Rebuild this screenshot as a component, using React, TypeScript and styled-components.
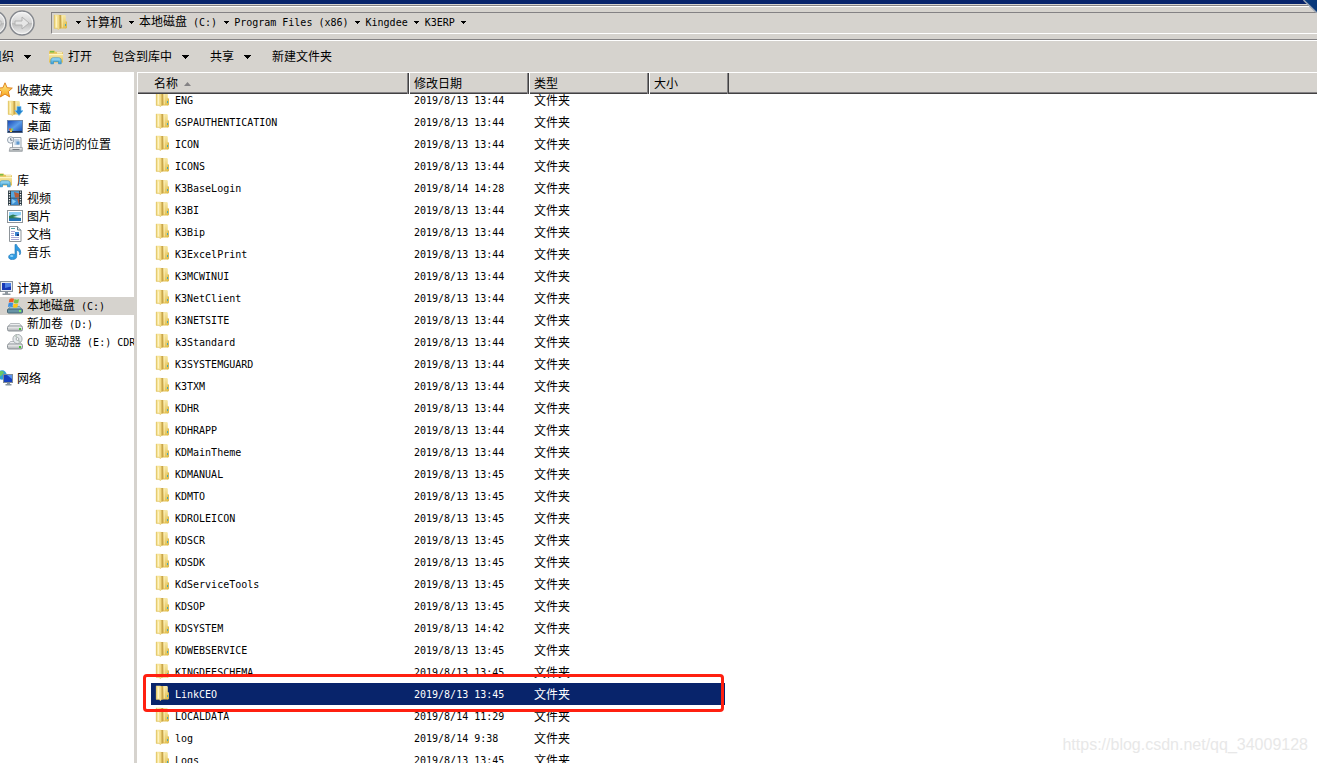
import React from "react";
import styled, { createGlobalStyle, css } from "styled-components";

const face = "#d6d3ce";
const navy = "#08246b";
const shade = "#848284";

const GlobalStyle = createGlobalStyle`
  *, *::before, *::after { box-sizing: border-box; }
  body {
    margin: 0;
    overflow: hidden;
    background: #fff;
    color: #000;
    font: 12px/18px "Liberation Sans", "Noto Sans CJK SC", sans-serif;
  }
  button { font: inherit; color: inherit; background: none; border: 0; padding: 0; }
  a { color: inherit; text-decoration: none; }
  ul, ol { list-style: none; margin: 0; padding: 0; }
  svg { display: block; flex: none; }
`;

/* ---------- text ---------- */

const Han = styled.span`
  font-family: "Noto Sans CJK SC", sans-serif;
  font-size: 12px;
`;
const Latin = styled.span`
  font-family: "DejaVu Sans Mono", "Liberation Mono", monospace;
  font-size: 10px;
`;
const Line = styled.span`
  display: block;
  white-space: pre;
  line-height: 18px;
`;

function Text({ children }: { children: string }) {
  const parts = children.match(/[\u4e00-\u9fff]+|[^\u4e00-\u9fff]+/g) || [];
  return (
    <Line>
      {parts.map((p, i) =>
        /[\u4e00-\u9fff]/.test(p) ? <Han key={i}>{p}</Han> : <Latin key={i}>{p}</Latin>
      )}
    </Line>
  );
}

/* ---------- icons ---------- */

const Icon = ({ children, size = 16 }: { children: React.ReactNode; size?: number }) => (
  <svg width={size} height={size} viewBox="0 0 16 16" aria-hidden="true">
    {children}
  </svg>
);

const HiddenSvg = styled.svg`
  position: absolute;
`;

const Defs = () => (
  <HiddenSvg width="0" height="0" aria-hidden="true">
    <defs>
      <linearGradient id="flap" x1="0" x2="1">
        <stop offset="0" stopColor="#e9cf72" />
        <stop offset="0.35" stopColor="#fbeba6" />
        <stop offset="1" stopColor="#f0d67c" />
      </linearGradient>
      <linearGradient id="back" x1="0" y1="0" x2="0" y2="1">
        <stop offset="0" stopColor="#f7e9a8" />
        <stop offset="1" stopColor="#e3bf4e" />
      </linearGradient>
      <linearGradient id="spine" x1="0" x2="1">
        <stop offset="0" stopColor="#e3c468" />
        <stop offset="1" stopColor="#c19c42" />
      </linearGradient>
      <linearGradient id="blue" x1="0" y1="0" x2="1" y2="1">
        <stop offset="0" stopColor="#1443b4" />
        <stop offset="0.5" stopColor="#5c9de8" />
        <stop offset="1" stopColor="#0b45ae" />
      </linearGradient>
      <linearGradient id="stand" x1="0" y1="0" x2="0" y2="1">
        <stop offset="0" stopColor="#a9e1f7" />
        <stop offset="1" stopColor="#2e9bd6" />
      </linearGradient>
      <linearGradient id="metal" x1="0" y1="0" x2="0" y2="1">
        <stop offset="0" stopColor="#fafafa" />
        <stop offset="1" stopColor="#a9adb0" />
      </linearGradient>
      <linearGradient id="star" x1="0" y1="0" x2="0" y2="1">
        <stop offset="0" stopColor="#fff08a" />
        <stop offset="1" stopColor="#f8a21c" />
      </linearGradient>
      <linearGradient id="orb" x1="0" y1="0" x2="0" y2="1">
        <stop offset="0" stopColor="#f4f4f4" />
        <stop offset="0.5" stopColor="#d2d2d2" />
        <stop offset="0.52" stopColor="#bcbcbc" />
        <stop offset="1" stopColor="#efefef" />
      </linearGradient>
    </defs>
  </HiddenSvg>
);

const folderShape = (
  <>
    <path d="M7 1h5l.8.8V7l1.200 1v5.500l-1 1H7z" fill="url(#back)" />
    <path d="M12.800 7l1.200 1v5.500l-1 1h-.5z" fill="#dcb94e" />
    <path d="M5 1h3.200v13L5 15.500z" fill="url(#spine)" />
    <path d="M1 .8h4.500l.8 1V15l-.8.800L4 14.500H1z" fill="url(#flap)" />
    <path d="M1.300 1v13.300H4l1.500 1.300" fill="none" stroke="#dfc366" strokeWidth="0.7" />
    <path d="M3.500 2.500v11" stroke="#fff6cc" strokeWidth="0.8" />
    <path d="M9.300 2v11.500" stroke="#fbeeb4" strokeWidth="0.8" />
    <rect x="12" y="10" width="1" height="2" fill="#46a8b8" />
  </>
);
const FolderIcon = () => <Icon>{folderShape}</Icon>;
const DownloadIcon = () => (
  <Icon>
    {folderShape}
    <path d="M10 6.5h4v4h2.2l-4.2 5-4.2-5H10z" fill="#2583cf" stroke="#7cc3f0" strokeWidth="0.7" />
  </Icon>
);
const LibraryIcon = () => (
  <Icon>
    <path d="M1 2.5l1-1h4.5l1 1.3H14l1 1V13H1z" fill="#e6c65c" />
    <path d="M2 2.2h4.2v1.2H2z" fill="#5eb842" />
    <path d="M9 3.2h5v1.2H9z" fill="#f7f2d4" />
    <path d="M1 5h14v8.5H1z" fill="url(#back)" />
    <path d="M1 5.4h14" stroke="#fff6c8" />
    <path
      d="M2.8 14.8V11.5c0-1.7 1.2-2.7 2.6-2.7h5.2c1.4 0 2.6 1 2.6 2.7v3.3h-2.7v-2.4h-5v2.4z"
      fill="url(#stand)"
      stroke="#338fc4"
      strokeWidth="0.7"
    />
  </Icon>
);
const StarIcon = () => (
  <Icon>
    <path
      d="M8 .8l2.1 4.9 5.2.4-4 3.5 1.3 5.3L8 12.1l-4.6 2.8 1.3-5.3-4-3.5 5.2-.4z"
      fill="url(#star)"
      stroke="#dd7a12"
      strokeWidth="0.9"
    />
  </Icon>
);
const DesktopIcon = () => (
  <Icon>
    <rect x="0.5" y="2.5" width="15" height="12" fill="url(#blue)" stroke="#6e86a8" />
    <path d="M1 13h14v1.5H1z" fill="#1a2f55" />
    <path d="M2 10.5h2v2H2z" fill="#f15a29" />
    <path d="M4 10.5h2v2H4z" fill="#8cd04c" />
    <path d="M3 12.5h2v1.5H3z" fill="#ffd23e" />
  </Icon>
);
const RecentIcon = () => (
  <Icon>
    <path d="M5.5 1.5h8.5v11H5.5z" fill="#f5f7f9" stroke="#98a2ac" />
    <path d="M7.5 4h5M7.5 6h5M7.5 8h5" stroke="#86abcf" />
    <rect x="9.5" y="5.5" width="3" height="3" fill="#5e98ce" />
    <path d="M3 11.5h12.3v3.8H2.2z" fill="url(#metal)" stroke="#8b9298" strokeWidth="0.7" />
    <path d="M5.5 13.5h7" stroke="#747b82" />
    <circle cx="3.7" cy="4" r="3.2" fill="#eef3f8" stroke="#8b98a6" strokeWidth="0.9" />
    <path d="M3.7 2v2.2h1.8" fill="none" stroke="#44576d" strokeWidth="0.8" />
  </Icon>
);
const VideoIcon = () => (
  <Icon>
    <rect x="1" y="0.5" width="14" height="15" fill="#2c3a42" />
    <rect x="4" y="1.2" width="8" height="6.5" fill="#56a7e0" />
    <rect x="4" y="8.4" width="8" height="6.5" fill="#3f8fd2" />
    <path d="M7 2l5 1.5v4H8z" fill="#b65e3b" />
    <path d="M5 9l4 2.2-3.5 3z" fill="#8fd0f4" />
    <path d="M10 8.4h2v6.5z" fill="#b65e3b" />
    <path d="M2.5 1.5v14M13.5 1.5v14" stroke="#f1f5f6" strokeWidth="1.3" strokeDasharray="1.2 1.3" />
  </Icon>
);
const PictureIcon = () => (
  <Icon>
    <rect x="0.5" y="2.5" width="15" height="12" fill="#fff" stroke="#8f9599" />
    <rect x="2" y="4" width="12" height="9" fill="#8ed0f5" />
    <path d="M2 8l4-1.5L14 9v2H2z" fill="#2d7e55" />
    <path d="M6 9l8-2v3z" fill="#e7f6fb" />
    <path d="M2 10.3h12V13H2z" fill="#2374b8" />
  </Icon>
);
const DocumentIcon = () => (
  <Icon>
    <path d="M2.5.5h8l3.500 3.500v11.500h-11.500z" fill="#fff" stroke="#8d9499" />
    <path d="M10.500.5V4H14" fill="#dfe6ea" stroke="#667f88" />
    <path d="M4 2.500h4" stroke="#4f9fa5" />
    <path d="M4 5.500h4M4 7.500h3M4 9.500h3M4 11.500h8M4 13.500h8" stroke="#aaa6d4" />
    <rect x="8" y="6" width="4" height="4" fill="#3c84d0" />
    <rect x="10" y="8" width="2" height="2" fill="#173d80" />
  </Icon>
);
const MusicIcon = () => (
  <Icon>
    <path
      d="M8 .5h1.500c.4 3 4.700 3.800 4.200 8.300-.1.900-.6 1.700-1.100 2.200.4-2.700-.9-4.300-2.900-5v6.600c0 1.900-1.900 3-4.200 3-2.200 0-3.900-.9-3.900-2.700 0-1.700 1.900-2.900 3.900-2.900 1 0 1.800.2 2.500.5z"
      fill="#2f9be2"
      stroke="#1c74b4"
      strokeWidth="0.6"
    />
    <ellipse cx="4.700" cy="12" rx="1.700" ry="1" fill="#8fd3f8" />
  </Icon>
);
const ComputerIcon = () => (
  <Icon>
    <rect x="3.500" y="1.500" width="12" height="10" fill="#e9edf0" stroke="#8b949b" />
    <rect x="5" y="3" width="9" height="7" fill="#1739b6" />
    <path d="M8 3h6v3.500L8 8z" fill="#4c7fe4" />
    <path d="M8 12h3v1.500h2.500v1.500h-8v-1.500H8z" fill="#8f989f" />
  </Icon>
);
const drive = (
  <>
    <path d="M3.500 7.500h9l2.500 3H1z" fill="#eceeef" stroke="#9ca2a6" strokeWidth="0.7" />
    <rect x="0.500" y="10" width="15" height="5" rx="1.500" fill="url(#metal)" stroke="#8a9196" />
    <rect x="12" y="12" width="2" height="2" fill="#46c83c" />
  </>
);
const SystemDriveIcon = () => (
  <Icon>
    <path d="M3.500 8.500h9l2.500 3H1z" fill="#9cc4d6" stroke="#628a9a" strokeWidth="0.7" />
    <rect x="0.500" y="11" width="15" height="4" rx="1" fill="#6793a6" stroke="#456674" />
    <rect x="12" y="12" width="2" height="2" fill="#7df45c" />
    <path d="M2.500 1c1.500-1 3-1 4.500-.2L6.300 4.500c-1.500-.8-3-.8-4.500 0z" fill="#ee5a24" />
    <path d="M7.500 1.100c1.500.8 3 .8 4.500 0L11.300 4.800c-1.500.8-3 .8-4.500 0z" fill="#79c143" />
    <path d="M1.600 5.200c1.500-.8 3-.8 4.500 0L5.400 9c-1.500-.8-3-.8-4.500 0z" fill="#3b8fe0" />
    <path d="M6.600 5.500c1.500.8 3 .8 4.500 0l-.7 3.700c-1.500.8-3 .8-4.500 0z" fill="#fcc419" />
  </Icon>
);
const DriveIcon = () => <Icon>{drive}</Icon>;
const DiscDriveIcon = () => (
  <Icon>
    {drive}
    <circle cx="10.500" cy="5" r="4.600" fill="#e4e8ea" stroke="#979da1" strokeWidth="0.8" />
    <path d="M10.500 5L7.500 1.800 10 .8zM10.500 5l3.600 2.500-2 1.800z" fill="#b9c7bd" />
    <circle cx="10.500" cy="5" r="1.400" fill="#fff" stroke="#888f94" strokeWidth="0.700" />
  </Icon>
);
const NetworkIcon = () => (
  <Icon>
    <circle cx="5" cy="5" r="4.700" fill="#2f9fd8" />
    <path d="M2 2c2-1.500 4-1 5 .5L5 5 2.500 7zM6 5l3-1v4H6z" fill="#6cc763" />
    <rect x="6.500" y="4.500" width="9" height="8" fill="#e6eaee" stroke="#7f8b95" />
    <rect x="7" y="5" width="8" height="7" fill="#1641c0" />
    <path d="M10 5h5v4z" fill="#5b94f0" />
    <path d="M10 13h3v1h1.500v1.500h-6V14H10z" fill="#8796a0" />
  </Icon>
);

const Caret = ({ wide }: { wide?: boolean }) =>
  wide ? (
    <svg width="8" height="4" viewBox="0 0 8 4" shapeRendering="crispEdges" aria-hidden="true">
      <path d="M0 0h8L4 4z" />
    </svg>
  ) : (
    <svg width="6" height="3" viewBox="0 0 6 3" shapeRendering="crispEdges" aria-hidden="true">
      <path d="M0 0h6L3 3z" />
    </svg>
  );

/* ---------- window frame ---------- */

const Window = styled.div`
  position: relative;
  display: flex;
  flex-direction: column;
  height: 100vh;
  overflow: hidden;
  background: ${face};
`;
const TitleEdge = styled.div`
  flex: none;
  height: 7px;
  background: ${face};
  border-top: 4px solid ${navy};
  border-bottom: 1px solid #fff;
  box-shadow: inset 0 -1px ${shade};
`;
const Corner = styled.svg`
  position: absolute;
  top: 0;
  right: 0;
`;

const AddressRow = styled.nav`
  flex: none;
  display: flex;
  height: 33px;
  padding-top: 5px;
  border-bottom: 1px solid ${shade};
`;
const HistoryButtons = styled.div`
  flex: none;
  width: 51px;
  height: 24px;
  display: flex;
  margin-top: -2px;
`;
const OrbButton = styled.button`
  flex: none;
  width: 26px;
  height: 26px;
  & + & { margin-left: 2px; }
  &:first-child { margin-left: -19px; }
`;
const AddressBox = styled.ol`
  flex: 1;
  display: flex;
  align-items: center;
  height: 22px;
  padding: 0 0 2px 1px;
  border: solid ${shade};
  border-width: 1px 0 0 1px;
  border-bottom: 1px solid #fff;
`;
const Crumb = styled.li`
  display: flex;
  align-items: center;
`;
const CrumbArrow = styled.button`
  width: 17px;
  height: 18px;
  display: flex;
  align-items: center;
  justify-content: center;
`;

const Toolbar = styled.div`
  flex: none;
  display: flex;
  align-items: center;
  height: 32px;
  border-top: 1px solid #fff;
`;
const ToolButton = styled.button`
  display: flex;
  align-items: center;
  gap: 9px;
  margin-right: 21px;
  &:first-child { margin-left: -10px; margin-right: 17px; }
`;
const OpenButton = styled(ToolButton)`
  gap: 4px;
  margin-right: 20px;
`;

const Body = styled.div`
  flex: 1;
  min-height: 0;
  display: flex;
`;

/* ---------- navigation pane ---------- */

const Sidebar = styled.aside`
  flex: none;
  width: 137px;
  overflow: hidden;
  padding-top: 9px;
  background: #fff;
  border-right: 3px solid ${face};
`;
const Group = styled.ul`
  margin-bottom: 18px;
`;
const Place = styled.a<{ $root?: boolean; $active?: boolean }>`
  display: flex;
  align-items: center;
  gap: 4px;
  height: 18px;
  padding-left: 7px;
  ${(p) => p.$root && css`padding-left: 0; margin-left: -3px;`}
  ${(p) => p.$active && css`background: ${face};`}
`;

type Entry = { label: string; icon: () => React.ReactElement; active?: boolean };
const groups: Entry[][] = [
  [
    { label: "收藏夹", icon: StarIcon },
    { label: "下载", icon: DownloadIcon },
    { label: "桌面", icon: DesktopIcon },
    { label: "最近访问的位置", icon: RecentIcon },
  ],
  [
    { label: "库", icon: LibraryIcon },
    { label: "视频", icon: VideoIcon },
    { label: "图片", icon: PictureIcon },
    { label: "文档", icon: DocumentIcon },
    { label: "音乐", icon: MusicIcon },
  ],
  [
    { label: "计算机", icon: ComputerIcon },
    { label: "本地磁盘 (C:)", icon: SystemDriveIcon, active: true },
    { label: "新加卷 (D:)", icon: DriveIcon },
    { label: "CD 驱动器 (E:) CDROM", icon: DiscDriveIcon },
  ],
  [{ label: "网络", icon: NetworkIcon }],
];

/* ---------- file list ---------- */

const ListPane = styled.main`
  flex: 1;
  min-width: 0;
  overflow: hidden;
  background: #fff;
`;
const Table = styled.table`
  display: block;
  width: 100%;
`;
const Head = styled.thead`
  display: block;
  position: relative;
  z-index: 1;
  background: ${face};
  border-top: 1px solid #fff;
  border-bottom: 1px solid #424142;
  box-shadow: inset 0 -1px ${shade};
`;
const HeadRow = styled.tr`
  display: grid;
  grid-template-columns: 272px 120px 120px 80px;
  height: 20px;
`;
const HeadCell = styled.th`
  display: flex;
  align-items: center;
  gap: 6px;
  padding-left: 5px;
  font-weight: normal;
  border-right: 1px solid #424142;
  box-shadow: inset 1px 0 #fff, inset -1px 0 ${shade};
  &:first-child { padding-left: 17px; }
`;
const Rows = styled.tbody`
  display: block;
  margin-top: -5px;
`;
const Row = styled.tr<{ $selected?: boolean }>`
  display: grid;
  position: relative;
  grid-template-columns: 258px 120px 196px;
  width: 574px;
  height: 22px;
  margin-left: 14px;
  ${(p) => p.$selected && css`
    z-index: 1;
    color: #fff;
    background: ${navy};
    &::after {
      content: "";
      position: absolute;
      inset: -9px 1px -7px -8px;
      border: 3px solid #ff2010;
      border-radius: 4px;
    }
  `}
`;
const Cell = styled.td`
  display: flex;
  align-items: center;
  gap: 4px;
  padding: 0 0 0 5px;
  &:first-child { padding-left: 4px; }
  svg { margin-bottom: 2px; }
`;

const Watermark = styled.div`
  position: absolute;
  right: 9px;
  bottom: 8px;
  font: 16px/20px "Liberation Sans", sans-serif;
  color: #e8e8e8;
`;

const day13 = "2019/8/13 ";
const files: [string, string][] = [
  ["ENG", day13 + "13:44"],
  ["GSPAUTHENTICATION", day13 + "13:44"],
  ["ICON", day13 + "13:44"],
  ["ICONS", day13 + "13:44"],
  ["K3BaseLogin", "2019/8/14 14:28"],
  ["K3BI", day13 + "13:44"],
  ["K3Bip", day13 + "13:44"],
  ["K3ExcelPrint", day13 + "13:44"],
  ["K3MCWINUI", day13 + "13:44"],
  ["K3NetClient", day13 + "13:44"],
  ["K3NETSITE", day13 + "13:44"],
  ["k3Standard", day13 + "13:44"],
  ["K3SYSTEMGUARD", day13 + "13:44"],
  ["K3TXM", day13 + "13:44"],
  ["KDHR", day13 + "13:44"],
  ["KDHRAPP", day13 + "13:44"],
  ["KDMainTheme", day13 + "13:44"],
  ["KDMANUAL", day13 + "13:45"],
  ["KDMTO", day13 + "13:45"],
  ["KDROLEICON", day13 + "13:45"],
  ["KDSCR", day13 + "13:45"],
  ["KDSDK", day13 + "13:45"],
  ["KdServiceTools", day13 + "13:45"],
  ["KDSOP", day13 + "13:45"],
  ["KDSYSTEM", day13 + "14:42"],
  ["KDWEBSERVICE", day13 + "13:45"],
  ["KINGDEESCHEMA", day13 + "13:45"],
  ["LinkCEO", day13 + "13:45"],
  ["LOCALDATA", "2019/8/14 11:29"],
  ["log", "2019/8/14 9:38"],
  ["Logs", day13 + "13:45"],
];
const crumbs = ["计算机", "本地磁盘 (C:)", "Program Files (x86)", "Kingdee", "K3ERP"];

const Orb = ({ back }: { back?: boolean }) => (
  <svg width="26" height="26" viewBox="0 0 26 26" aria-hidden="true">
    <circle cx="13" cy="13" r="12" fill="url(#orb)" stroke="#85888e" strokeWidth="1.500" />
    <circle cx="13" cy="13" r="10.700" fill="none" stroke="#f6f6f6" />
    <path
      d="M6 11h7V7l7 6-7 6v-4H6z"
      fill="#e6e6e6"
      stroke="#b2b2b2"
      transform={back ? "rotate(180 13 13)" : undefined}
    />
  </svg>
);

export default function App() {
  return (
    <Window>
      <GlobalStyle />
      <Defs />
      <TitleEdge />
      <Corner width="15" height="13" viewBox="0 0 15 13" aria-hidden="true">
        <path d="M2 0h13v13z" fill="#08397b" />
        <path d="M1.500 0L15 13" stroke="#9ba6b5" strokeWidth="1.500" />
      </Corner>

      <AddressRow aria-label="地址">
        <HistoryButtons>
          <OrbButton aria-label="后退"><Orb back /></OrbButton>
          <OrbButton aria-label="前进"><Orb /></OrbButton>
        </HistoryButtons>
        <AddressBox>
          <Crumb>
            <FolderIcon />
            <CrumbArrow aria-label="展开"><Caret /></CrumbArrow>
          </Crumb>
          {crumbs.map((c) => (
            <Crumb key={c}>
              <a href="#"><Text>{c}</Text></a>
              <CrumbArrow aria-label={c}><Caret /></CrumbArrow>
            </Crumb>
          ))}
        </AddressBox>
      </AddressRow>

      <Toolbar>
        <ToolButton><Text>组织</Text><Caret wide /></ToolButton>
        <OpenButton><LibraryIcon /><Text>打开</Text></OpenButton>
        <ToolButton><Text>包含到库中</Text><Caret wide /></ToolButton>
        <ToolButton><Text>共享</Text><Caret wide /></ToolButton>
        <ToolButton><Text>新建文件夹</Text></ToolButton>
      </Toolbar>

      <Body>
        <Sidebar>
          {groups.map((g) => (
            <Group key={g[0].label}>
              {g.map((e, i) => (
                <li key={e.label}>
                  <Place href="#" $root={i === 0} $active={e.active}>
                    <e.icon />
                    <Text>{e.label}</Text>
                  </Place>
                </li>
              ))}
            </Group>
          ))}
        </Sidebar>
        <ListPane>
          <Table>
            <Head>
              <HeadRow>
                <HeadCell>
                  <Text>名称</Text>
                  <svg width="7" height="4" viewBox="0 0 7 4" aria-hidden="true">
                    <path d="M0 4h7L3.500 0z" fill={shade} />
                  </svg>
                </HeadCell>
                <HeadCell><Text>修改日期</Text></HeadCell>
                <HeadCell><Text>类型</Text></HeadCell>
                <HeadCell><Text>大小</Text></HeadCell>
              </HeadRow>
            </Head>
            <Rows>
              {files.map(([name, date]) => (
                <Row key={name} $selected={name === "LinkCEO"}>
                  <Cell><FolderIcon /><Text>{name}</Text></Cell>
                  <Cell><Text>{date}</Text></Cell>
                  <Cell><Text>文件夹</Text></Cell>
                </Row>
              ))}
            </Rows>
          </Table>
        </ListPane>
      </Body>
      <Watermark>https://blog.csdn.net/qq_34009128</Watermark>
    </Window>
  );
}
